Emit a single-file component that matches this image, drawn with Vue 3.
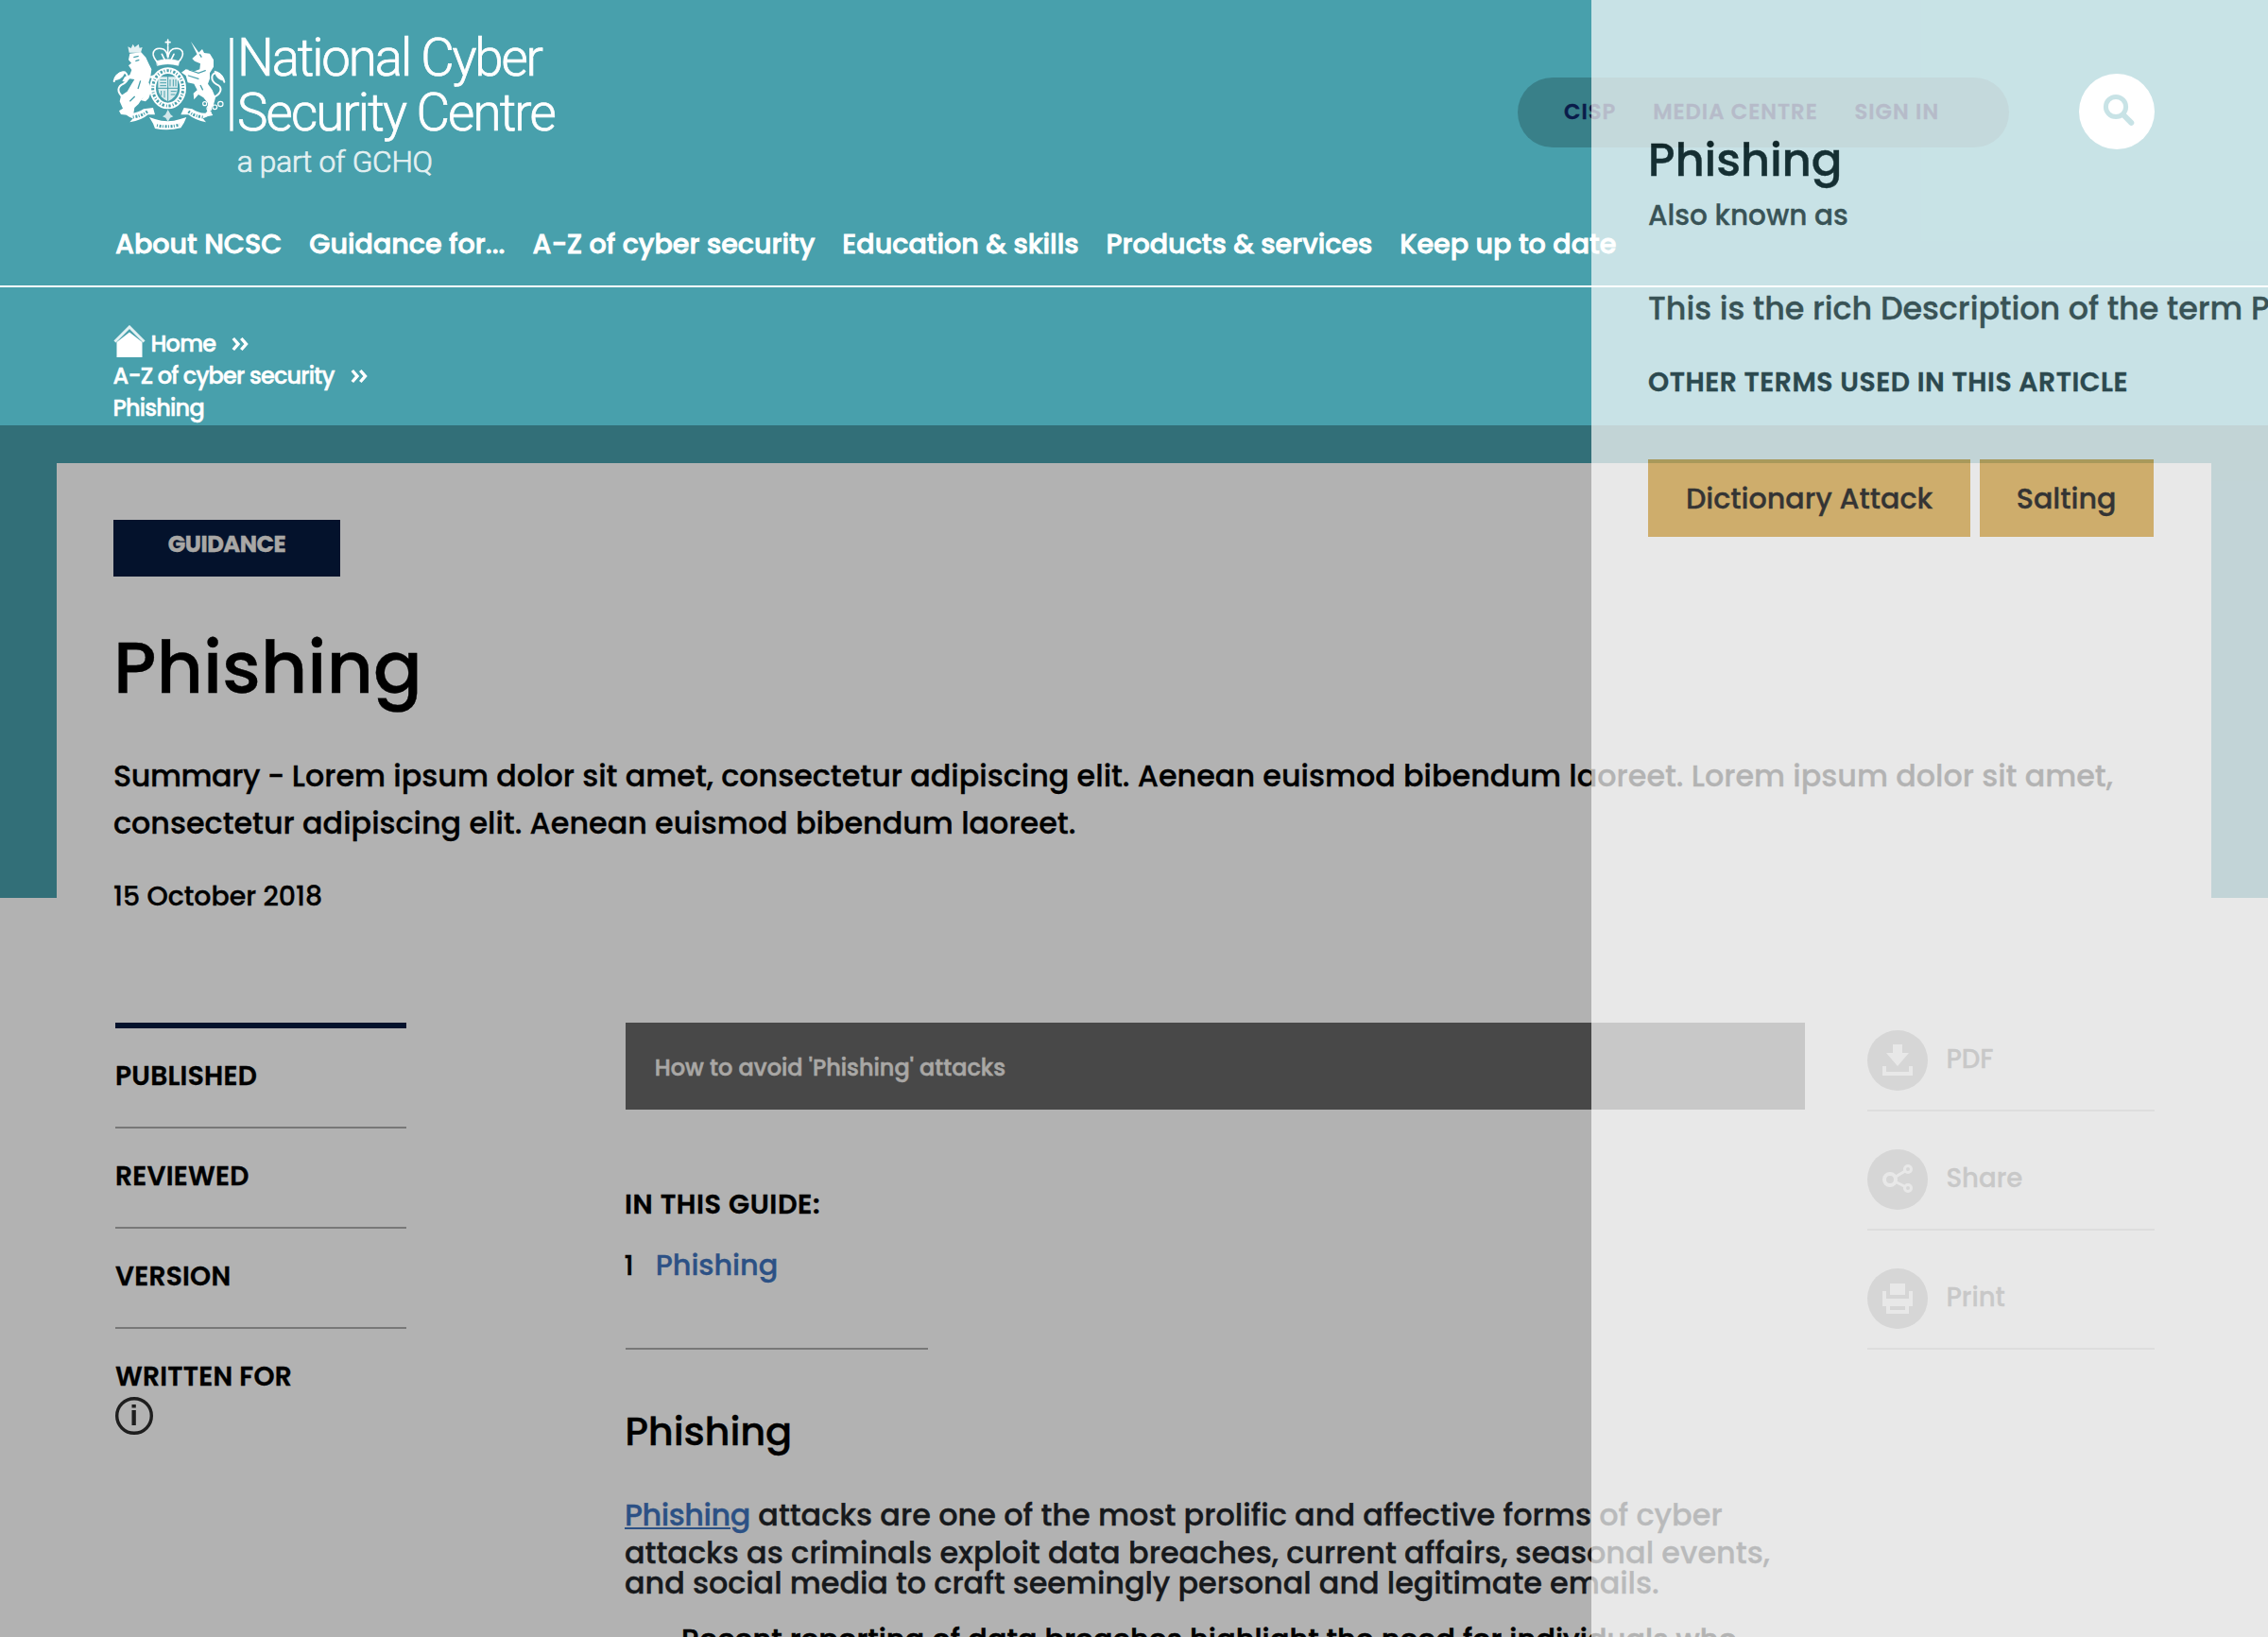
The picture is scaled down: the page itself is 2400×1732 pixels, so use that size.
<script setup>
const nav = ['About NCSC', 'Guidance for...', 'A-Z of cyber security', 'Education & skills', 'Products & services', 'Keep up to date']
const utility = ['CISP', 'MEDIA CENTRE', 'SIGN IN']
const meta = ['PUBLISHED', 'REVIEWED', 'VERSION', 'WRITTEN FOR']
const terms = ['Dictionary Attack', 'Salting']
const actions = [
  { label: 'PDF', icon: 'pdf' },
  { label: 'Share', icon: 'share' },
  { label: 'Print', icon: 'print' },
]
</script>

<template>
  <div class="page">
    <header class="header">
      <div class="top">
        <svg class="logo" viewBox="0 0 1560 570" width="520" height="190">
          <g fill="#fff">
            <!-- lion -->
            <path d="M110 107 L106 88 L116 93 L122 80 L128 90 L140 80 L143 92 L152 90 L147 107 Z" opacity=".85" />
            <path d="M112 110 L148 106 L163 122 L172 142 L181 160 L178 182 L172 202 L182 224 L166 244 L150 254 L140 270 L127 282 L124 300 L112 306 L84 303 L78 292 L90 284 L80 262 L84 244 L104 230 L118 206 L127 192 L112 190 L102 200 L88 198 L96 184 L112 178 L118 162 L108 148 L117 140 L108 130 Z" />
            <path d="M182 224 L172 252 L162 262 L146 258 Z M172 184 L192 176 L186 192 Z" />
            <!-- unicorn -->
            <path d="M306 72 L332 108 L326 113 Z" />
            <path d="M326 112 L342 96 L348 108 L366 110 L378 130 L378 152 L366 172 L366 190 L360 206 L374 226 L384 250 L378 272 L366 290 L376 306 L346 312 L358 292 L360 268 L346 250 L330 240 L316 256 L314 236 L326 226 L316 206 L296 202 L290 180 L276 170 L290 160 L318 166 L334 160 L336 142 L318 134 L310 126 Z" />
          </g>
          <g fill="none" stroke="#fff" stroke-linecap="round">
            <!-- tails -->
            <path d="M92 250 C68 230 74 214 92 206 C112 194 106 168 88 170 C74 172 64 184 62 198" stroke-width="6" />
            <path d="M96 168 C78 164 68 180 66 194 C82 192 92 184 96 168Z" fill="#fff" stroke-width="2" />
            <path d="M380 248 C408 234 404 214 388 208 C366 196 370 170 388 172 C402 174 410 188 412 200" stroke-width="6" />
            <path d="M382 166 C398 168 408 182 410 196 C392 192 384 182 382 166Z" fill="#fff" stroke-width="2" />
            <!-- chain -->
            <g stroke-width="3.5">
              <circle cx="350" cy="269" r="6" /><circle cx="364" cy="284" r="7" /><circle cx="382" cy="280" r="7" /><circle cx="400" cy="270" r="8" />
              <path d="M300 162 L330 172 L352 164 M298 180 L330 190" stroke="#48a0ac" />
            </g>
            <!-- crown -->
            <path d="M199 136 C176 112 188 92 208 94 C224 94 230 106 233 122 C236 106 244 94 258 94 C280 92 290 112 267 136" stroke-width="5" stroke-dasharray="7 3" />
            <path d="M233 66 V84 M226 74 H240 M233 88 V122" stroke-width="5" />
            <path d="M214 112 L224 132 M252 112 L242 132" stroke-width="5" />
            <path d="M197 134 Q233 122 269 134 L266 148 Q233 138 200 148Z" fill="#fff" stroke-width="2" />
            <!-- garter -->
            <ellipse cx="233" cy="220" rx="48" ry="56" stroke-width="20" />
            <ellipse cx="233" cy="220" rx="48" ry="56" stroke="#48a0ac" stroke-width="9" stroke-dasharray="3 6 7 5" stroke-linecap="butt" />
          </g>
          <!-- shield -->
          <path d="M202 184 H264 V222 Q262 248 233 262 Q204 248 202 222Z" fill="#fff" opacity=".8" />
          <path d="M233 182 V262 M200 220 H266 M208 194 H228 M208 203 H228 M208 212 H228 M240 192 V214 M250 192 V214 M258 192 V214 M242 230 H260 M242 240 H256 M212 228 V244 M222 228 V250" stroke="#48a0ac" stroke-width="3" fill="none" />
          <!-- ribbon -->
          <g fill="#fff">
            <path d="M94 294 Q122 308 156 286 L186 282 L192 304 L170 304 Q150 322 112 328 L122 316 Q100 310 94 294Z" />
            <path d="M372 294 Q344 308 310 286 L284 282 L274 304 L298 304 Q320 322 354 328 L344 316 Q366 310 372 294Z" />
            <path d="M174 312 L192 318 Q233 332 272 318 L292 312 L284 330 L274 346 Q233 356 192 348 L186 332Z" />
            <path d="M233 288 L242 304 L250 310 L240 314 L233 326 L226 314 L216 310 L225 304Z" opacity=".75" />
          </g>
          <path d="M122 312 Q150 308 168 294 M344 312 Q316 308 298 294 M198 338 Q233 346 270 336" stroke="#48a0ac" stroke-width="9" stroke-dasharray="3 5 6 4" fill="none" />
          <path d="M124 122 L140 118 M130 134 L142 130 M146 196 L138 222 M128 246 L112 262 M334 112 L340 122 M336 210 L344 226" stroke="#48a0ac" stroke-width="4" fill="none" />
          <rect x="430" y="60" width="10" height="296" fill="#fff" />
          <g class="logo-text">
            <text x="453" y="181" font-size="164" textLength="972">National Cyber</text>
            <text x="453" y="355" font-size="164" textLength="1013">Security Centre</text>
            <text x="452" y="486" font-size="95" textLength="622" opacity=".85">a part of GCHQ</text>
          </g>
        </svg>
        <div class="tools">
          <div class="pill"><a v-for="u in utility" :key="u">{{ u }}</a></div>
          <div class="search">
            <svg viewBox="0 0 80 80" width="80" height="80" fill="none" stroke="#48a0ac">
              <circle cx="39" cy="35" r="10.6" stroke-width="5" />
              <path d="M47 43.5 L55.3 51.8" stroke-width="6" stroke-linecap="round" />
            </svg>
          </div>
        </div>
      </div>
      <nav class="nav"><a v-for="n in nav" :key="n">{{ n }}</a></nav>
    </header>

    <div class="crumbs">
      <div class="crumb">
        <svg class="home" viewBox="0 0 34 34" width="34" height="34">
          <path d="M1.5 17.5 L17 2 L32.5 17.5" fill="none" stroke="#fff" stroke-width="3" opacity=".85" />
          <path d="M3.5 34 V18 L17 7.5 L30.5 18 V34Z" fill="#fff" />
        </svg>
        <span class="home-label">Home</span>
        <svg class="chev" viewBox="0 0 18 14" width="18" height="14"><path d="M1.8 1 L7 7 L1.8 13 M10.3 1 L15.5 7 L10.3 13" /></svg>
      </div>
      <div class="crumb">
        <span>A-Z of cyber security</span>
        <svg class="chev" viewBox="0 0 18 14" width="18" height="14"><path d="M1.8 1 L7 7 L1.8 13 M10.3 1 L15.5 7 L10.3 13" /></svg>
      </div>
      <div class="crumb"><span>Phishing</span></div>
    </div>

    <main class="hero">
      <article class="card">
        <div class="badge">GUIDANCE</div>
        <h1>Phishing</h1>
        <p class="summary"><span class="lead">Summary - </span>Lorem ipsum dolor sit amet, consectetur adipiscing elit. Aenean euismod bibendum laoreet. Lorem ipsum dolor sit amet,<br>consectetur adipiscing elit. Aenean euismod bibendum laoreet.</p>
        <p class="date">15 October 2018</p>

        <div class="columns">
          <aside class="meta">
            <div v-for="m in meta" :key="m" class="meta-item">{{ m }}</div>
            <svg class="info" viewBox="0 0 40 40" width="40" height="40">
              <circle cx="20" cy="20" r="18.3" fill="none" stroke="#2b2b2b" stroke-width="3.4" />
              <path d="M17.5 8 H21.8 V11.6 H17.5Z M17.5 14 H21.8 V30 H17.5Z" fill="#2b2b2b" />
            </svg>
          </aside>

          <section class="body">
            <div class="bar">How to avoid 'Phishing' attacks</div>
            <h3>IN THIS GUIDE:</h3>
            <div class="toc"><span class="num">1</span><a>Phishing</a></div>
            <hr>
            <h2>Phishing</h2>
            <p class="para"><a>Phishing</a> attacks are one of the most prolific and affective forms of cyber</p>
            <p class="para next">attacks as criminals exploit data breaches, current affairs, seasonal events,</p>
            <p class="para tight">and social media to craft seemingly personal and legitimate emails.</p>
            <p class="quote">Recent reporting of data breaches highlight the need for individuals who</p>
          </section>

          <aside class="actions">
            <div v-for="a in actions" :key="a.label" class="action">
              <svg viewBox="0 0 64 64" width="64" height="64">
                <circle cx="32" cy="32" r="32" fill="#a9a9a9" />
                <g v-if="a.icon === 'pdf'" fill="#fff">
                  <path d="M27 15 H37 V24 H44 L32 38 L20 24 H27Z" />
                  <path d="M16 38 H20 V44 H44 V38 H48 V48 H16Z" />
                </g>
                <g v-else-if="a.icon === 'share'" fill="none" stroke="#fff">
                  <circle cx="24" cy="32" r="6" stroke-width="4" />
                  <circle cx="43" cy="21" r="3.5" stroke-width="3" />
                  <circle cx="43" cy="41" r="3.5" stroke-width="3" />
                  <path d="M30 29 L40 23 M30 34.5 L40 39.5" stroke-width="3" />
                </g>
                <g v-else fill="#fff">
                  <path d="M24 16 H40 V28 H24Z" />
                  <path fill-rule="evenodd" d="M16 24 H20 V32 H44 V24 H48 V40 H44 V48 H20 V40 H16Z M24 40 V44 H40 V40Z" />
                </g>
              </svg>
              <span>{{ a.label }}</span>
            </div>
          </aside>
        </div>
      </article>
    </main>

    <div class="shade"></div>

    <aside class="panel">
      <h2 class="p-title">Phishing</h2>
      <p class="p-also">Also known as</p>
      <p class="p-desc">This is the rich Description of the term Phishing</p>
      <h4>OTHER TERMS USED IN THIS ARTICLE</h4>
      <div class="terms"><a v-for="t in terms" :key="t">{{ t }}</a></div>
    </aside>
  </div>
</template>

<style>
body { overflow: hidden; }
</style>

<style scoped>
.page {
  position: relative;
  width: 2400px;
  height: 1732px;
  overflow: hidden;
  background: #fff;
  color: #000;
  font-family: Poppins, Inter, sans-serif;
  font-weight: 500;
  -webkit-text-stroke-width: .35px;
}
h1, h2, h3, h4, p { margin: 0; font-weight: 500; }
svg { display: block; flex: none; }
a { white-space: nowrap; }

.header {
  height: 302px;
  background: #48a0ac;
  border-bottom: 2px solid #fff;
}
.top {
  display: flex;
  justify-content: space-between;
  height: 237.6px;
  padding: 0 120px 0 100px;
}
.logo { margin-top: 20px; -webkit-text-stroke-width: 0; }
.logo-text { fill: #fff; stroke: #fff; stroke-width: 2.2px; font-family: Roboto, Inter, sans-serif; font-weight: 300; }
.tools { display: flex; align-items: flex-start; gap: 74px; padding-top: 78px; }
.pill {
  display: flex;
  gap: 38.8px;
  box-sizing: border-box;
  width: 520px;
  height: 74px;
  margin-top: 4px;
  padding-left: 49px;
  border-radius: 37px;
  background: rgba(0, 0, 0, .2);
  color: #0a1c4a;
  font-size: 22.7px;
  font-weight: 600;
  line-height: 72px;
  letter-spacing: 1px;
}
.search { width: 80px; height: 80px; border-radius: 50%; background: #fff; }
.nav {
  display: flex;
  gap: 29px;
  padding-left: 122px;
  color: #fff;
  font-size: 28.6px;
  line-height: 40px;
  -webkit-text-stroke: .8px #fff;
}

.crumbs {
  box-sizing: border-box;
  height: 146px;
  padding: 42.6px 0 0 119.5px;
  background: #48a0ac;
  color: #fff;
  font-size: 24px;
  letter-spacing: -.8px;
  line-height: 34px;
  -webkit-text-stroke: .5px #fff;
}
.crumb { display: flex; align-items: center; height: 34px; }
.home { margin-top: -5px; }
.home-label { margin-left: 6px; }
.chev { margin: 0 0 0 17px; fill: none; stroke: #fff; stroke-width: 3.4; overflow: visible; }

.hero {
  height: 1282px;
  padding: 40px 60px 0;
  background: linear-gradient(#48a0ac 500px, #fff 500px);
}
.card { height: 1242px; padding: 60px 60px 0; background: #fff; box-sizing: border-box; }
.badge {
  box-sizing: border-box;
  width: 240px;
  height: 60px;
  padding-top: 8.6px;
  background: #061b3f;
  color: #f2f0ec;
  font-size: 24.3px;
  font-weight: 700;
  letter-spacing: -.5px;
  line-height: 34px;
  text-align: center;
}
h1 { margin-top: 47.2px; font-size: 76.5px; letter-spacing: -.1px; line-height: 100px; }
.summary { margin-top: 38.4px; font-size: 31.8px; line-height: 50px; white-space: nowrap; }
.lead { letter-spacing: -.45px; }
.date { margin-top: 32.2px; font-size: 28.4px; line-height: 40px; }

.columns {
  display: grid;
  grid-template-columns: 308px 1248px 304px;
  column-gap: 232px;
  margin: 114.2px 0 0 2px;
}
.meta { border-top: 6px solid #061b3f; }
.meta-item {
  box-sizing: border-box;
  height: 106px;
  padding-top: 30.2px;
  border-bottom: 2px solid #acacac;
  font-size: 28.1px;
  font-weight: 600;
  letter-spacing: .25px;
  line-height: 40px;
}
.meta-item:nth-child(4) { height: 70.2px; border: 0; }
.info { margin-top: 1.8px; }

.bar {
  box-sizing: border-box;
  height: 92px;
  padding: 3px 0 0 30.8px;
  background: #676767;
  color: #f2f0ec;
  font-size: 24px;
  line-height: 89px;
  -webkit-text-stroke: .5px #f2f0ec;
}
h3 { margin: 79.9px 0 0 -1px; font-size: 28.8px; font-weight: 600; letter-spacing: .55px; line-height: 40px; }
.toc { display: flex; margin: 25.4px 0 0 -.5px; font-size: 30.4px; letter-spacing: -.1px; line-height: 40px; }
.num { width: 32.5px; font-size: 29px; margin-left: -1px; padding-right: 1px; box-sizing: border-box; }
.body a { color: #3f75bf; }
.toc a { margin-left: .8px; }
hr { width: 320px; height: 2px; margin: 66.7px 0 0; border: 0; background: #acacac; }
.body h2 { margin: 57.4px 0 0 -.8px; font-size: 41.7px; letter-spacing: -.2px; line-height: 60px; }
.para { margin: 37.4px 0 0 -1px; color: #212529; font-size: 31.9px; line-height: 40px; white-space: nowrap; }
.para a { letter-spacing: -.45px; text-decoration: underline; text-decoration-thickness: 2px; text-underline-offset: 2px; }
.next { margin-top: 0; }
.tight { margin-top: -4px; letter-spacing: -.07px; line-height: 32px; }
.quote { margin-top: 24.2px; padding-left: 59px; font-size: 30.6px; line-height: 40px; white-space: nowrap; -webkit-text-stroke-width: .6px; }

.actions { margin-left: -166px; padding-top: 8px; width: 304px; }
.action {
  display: flex;
  gap: 19.4px;
  margin-bottom: 40px;
  padding-bottom: 20px;
  border-bottom: 2px solid #cbcbcb;
  color: #666;
  font-size: 27.6px;
  line-height: 61px;
}

.shade { position: absolute; inset: 450px 0 0; background: rgba(0, 0, 0, .3); }

.panel {
  position: absolute;
  top: 0;
  right: 0;
  bottom: 0;
  left: 1684px;
  box-sizing: border-box;
  padding: 139px 0 0 60px;
  background: #fff;
  opacity: .7;
  white-space: nowrap;
}
.p-title { margin-left: -.2px; font-size: 48.4px; letter-spacing: -.2px; line-height: 60px; }
.p-also { margin-top: 8.7px; color: #333; font-size: 29.5px; line-height: 40px; }
.p-desc { margin-top: 53.9px; color: #333; font-size: 33.4px; letter-spacing: -.04px; line-height: 50px; }
h4 { margin-top: 32.2px; color: #212529; font-size: 28.2px; font-weight: 600; letter-spacing: .53px; line-height: 40px; }
.terms { display: flex; gap: 9.6px; margin-top: 62.2px; font-size: 30.2px; line-height: 83px; }
.terms a { height: 82px; padding: 0 40px; background: #daac4f; letter-spacing: -.04px; }
.terms a:last-child { padding: 0 39.6px 0 39px; }
</style>
